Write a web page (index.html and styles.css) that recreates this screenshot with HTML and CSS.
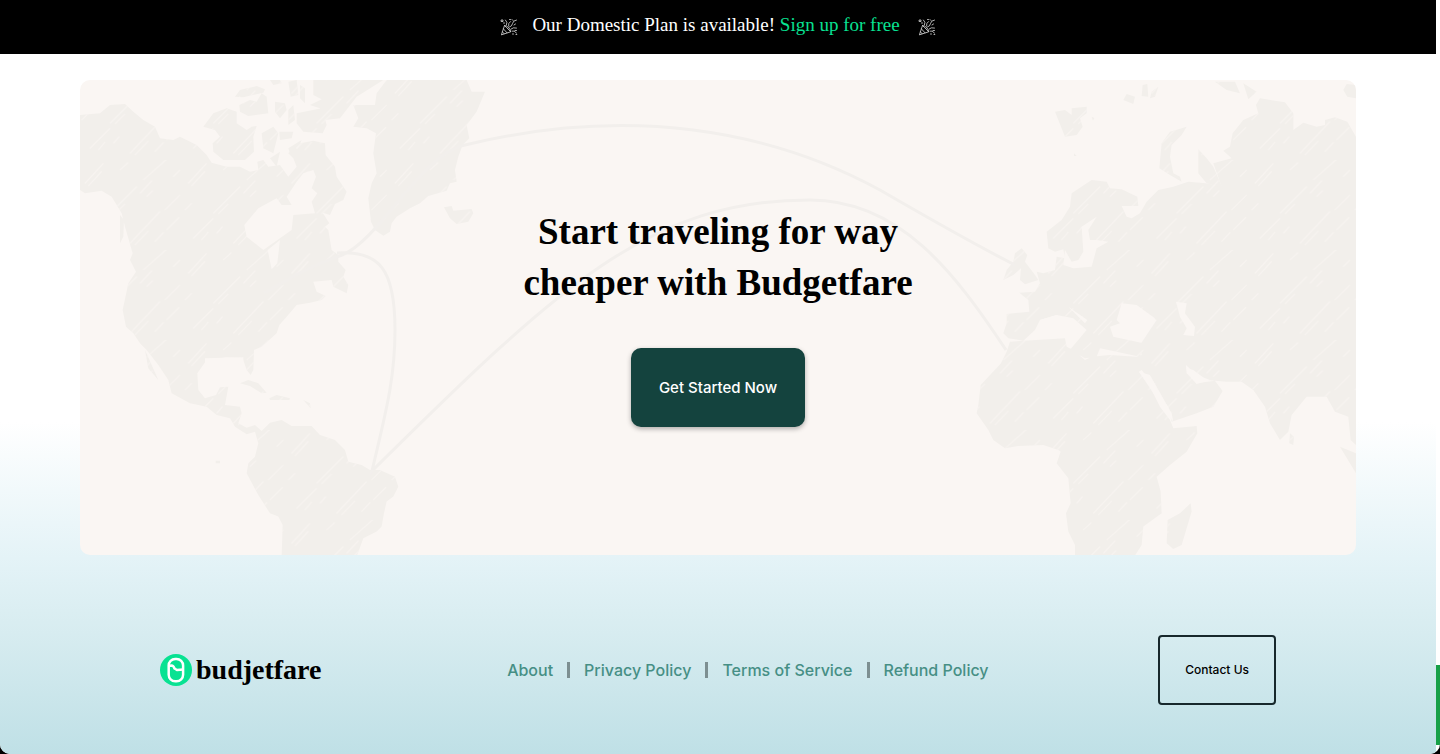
FILE: index.html
```html
<!DOCTYPE html>
<html lang="en">
<head>
<meta charset="utf-8">
<meta name="viewport" content="width=device-width, initial-scale=1">
<title>Budjetfare</title>
<link rel="stylesheet" href="styles.css">
</head>
<body>
<svg class="defs" aria-hidden="true">
  <symbol id="popper" viewBox="0 0 18 18">
    <g fill="none" stroke="currentColor" stroke-width="0.8" stroke-linecap="round" stroke-linejoin="round">
      <path d="M1.5 16.5 4.5 7.5Q6 9 10.500 13.500ZM3.500 11 7 14.800M2.600 14l1.500 1.700M4.500 7.500Q7 7.500 9 10Q11 12 10.500 13.500"/>
      <path d="M6.500 7Q8 4 5.500 2M8.500 8Q8 5 10.500 3.500M9.500 9Q12 8.500 12.500 5.500T16.500 2M11 11Q13 9 16.500 10M12 13Q14 12 16.500 15"/>
      <path d="M1.500 2h1.500v1.500h-1.500zM9.500 1.500h1M14 7l1.500-1M15 12.500h1.500M3.500 5h1M13 2.500l-1-1M12.500 16h1M16 16.500h.8"/>
    </g>
  </symbol>
</svg>
<div class="page">
  <header class="banner">
    <svg class="popper"><use href="#popper"/></svg>
    <p class="banner-text">Our Domestic Plan is available! <a href="#signup">Sign up for free</a></p>
    <svg class="popper"><use href="#popper"/></svg>
  </header>

  <main class="main">
    <section class="cta">
      <svg class="map" viewBox="0 0 1276 475" preserveAspectRatio="xMidYMid slice" aria-hidden="true">
        <defs>
          <pattern id="hatch" width="310" height="270" patternUnits="userSpaceOnUse">
            <path class="scratch" d="M15 70l55-60M25 78l40-44M90 160l80-80M105 162l30-30M190 60l70-62M180 100l36-38M200 110l18-18M30 235l60-60M55 240l20-24M150 250l90-95M165 255l40-42M255 150l45-45M260 210l38-38M225 245l26-28M120 30l24-22M280 50l20-20M5 150l20-20M100 220l18-20"/>
          </pattern>
          <g id="west">
            <path d="M0 135 60 130 90 105 135 102 160 125 190 150 225 170 240 205 280 210 300 200 350 225 380 255 395 278 440 290 480 290 510 305 535 300 532 275 550 270 565 290 600 285 625 320 650 290 640 265 625 250 650 222 700 212 735 220 737 255 765 290 770 320 800 365 790 390 765 402 750 435 728 428 748 460 735 470 745 480 755 540 775 555 775 575 797 600 790 620 805 645 800 670 760 650 755 630 700 635 710 665 737 678 725 690 690 698 650 705 620 740 598 765 590 790 545 830 522 840 520 900 512 915 500 900 488 865 440 862 380 870 352 910 355 960 375 985 408 975 420 952 445 950 435 1005 480 1010 485 1030 475 1060 500 1073 525 1065 545 1083 570 1058 605 1050 635 1068 695 1068 720 1095 765 1110 795 1140 805 1175 845 1185 870 1200 900 1200 945 1220 955 1250 940 1280 920 1295 912 1330 905 1370 890 1385 850 1405 830 1460 605 1460 608 1365 595 1340 570 1330 535 1275 500 1210 505 1180 525 1160 535 1120 525 1085 500 1093 465 1070 450 1045 410 1035 380 1010 330 1000 275 970 265 930 235 885 200 840 180 820 160 790 138 770 128 720 145 640 168 605 150 570 158 550 135 470 125 430 95 380 65 362 15 370 0 360Z"/>
            <path d="M120 435 132 450 130 500 120 520ZM195 840 235 930 205 895Z"/>
            <path d="M370 170 400 130 440 115 470 125 470 160 500 180 515 170 530 168 520 200 522 245 495 270 430 270 400 245 398 220 420 200 405 180ZM465 80 480 60 530 48 555 58 550 68 490 82ZM478 105 510 90 530 95 545 70 560 80 565 130 505 138 480 125ZM570 30 600 30 605 40 580 45ZM585 95 615 100 620 120 600 145 585 125ZM625 35 650 30 655 75 632 80ZM660 45 675 55 675 100 660 85ZM625 120 640 105 645 150 625 165ZM650 130 725 115 740 165 728 190 670 185 650 160ZM545 190 580 170 595 190 580 250 550 235ZM598 185 640 185 635 205 600 210ZM625 235 665 210 650 245 630 250ZM570 265 600 245 590 290ZM700 30 910 30 830 80 780 145 735 150 720 115 690 105 725 88 700 75Z"/>
            <path d="M920 30 1160 30 1175 65 1215 65 1190 125 1160 165 1168 205 1148 225 1135 260 1125 300 1130 335 1110 340 1100 362 1045 378 1020 400 990 415 950 440 935 460 930 485 910 497 885 480 873 455 865 385 875 340 890 310 880 250 888 190 860 175 820 170 835 145 820 105 885 105 890 70Z"/>
            <path d="M1092 412 1115 408 1120 422 1175 417 1180 430 1165 455 1130 462 1110 445ZM480 940 505 930 535 940 560 968 545 970 510 948ZM568 985 590 975 630 985 628 990 570 990ZM670 990 690 1000 692 1015ZM407 1172h13v8h-13z"/>
          </g>
          <g id="east">
            <path d="M250 1040 310 1125 355 1140 362 1145 350 1180 385 1225 392 1300 378 1330 385 1385 405 1425 405 1460 583 1460 605 1425 610 1370 665 1330 662 1265 650 1220 690 1185 740 1145 772 1090 770 1068 700 1075 690 1050 660 1010 630 950 597 905 605 900 640 945 660 980 685 1010 695 1055 770 1030 820 1010 848 963 825 932 770 940 738 895 760 900 800 930 860 935 905 935 940 960 975 1010 990 1060 1020 1110 1045 1085 1055 1035 1100 980 1160 980 1185 1025 1225 1040 1232 1110 1248 1125 1248 200 1222 155 1185 142 1155 150 1155 165 1130 170 1090 158 1060 180 1060 130 1035 97 960 85 948 105 955 130 910 150 878 190 870 230 850 242 875 265 820 280 845 350 798 340 745 335 700 350 655 360 620 395 600 430 575 445 560 440 545 408 595 408 592 380 545 358 510 355 500 335 455 330 395 370 390 410 365 450 320 485 325 535 345 545 370 538 375 565 350 560 345 600 310 610 290 605 300 640 285 665 238 668 265 690 268 725 200 732 200 760 190 790 205 805 250 812 285 780 300 750 350 735 400 745 440 780 385 845 400 845 435 865 470 860 480 835 600 860 610 820 520 800 510 770 540 760 530 750 545 700 650 750 600 825 605 855 590 860 510 855 455 860 435 870 400 840 380 830 375 805 210 815 200 845 183 880 155 910 122 945 115 1005 110 1030 145 1080 160 1110 195 1135 235 1128 310 1125Z"/>
            <path d="M220 575 225 550 245 535 262 555 255 575 285 615 295 630 255 643 240 630 243 595 220 615 190 630 200 600ZM345 125 375 120 395 135 395 115 440 110 440 130 420 145 428 170 410 195 375 200ZM550 90 560 72 585 80 580 102ZM608 45 622 42 625 80 605 78ZM635 65 655 50 645 80 630 85ZM825 35 885 35 900 70 860 60ZM910 40 950 65 925 88ZM1210 60 1220 42 1248 45 1248 85 1222 80ZM740 170 725 195 695 225 690 260 700 310 720 320 725 335 690 315 658 295 665 220 690 185ZM775 238 800 265 820 290 848 355 800 340 775 310ZM752 1300 755 1325 725 1425 700 1437 680 1420 683 1350 720 1330ZM1200 1130 1248 1150 1248 1210ZM1050 1090 1062 1100 1060 1125 1048 1120ZM402 250l8 8h-8zM455 140l8 4-4 8z"/>
          </g>
        </defs>
        <g transform="translate(0 -10) scale(.3333)">
          <use href="#west" class="land"/>
          <use href="#west" fill="url(#hatch)"/>
          <path class="sea" d="M493 465 535 415 590 385 605 405 635 405 620 380 650 335 670 310 700 300 708 320 695 355 712 370 695 395 705 430 640 435 635 480 600 505 550 540 500 500ZM563 540 600 510 592 580 575 598ZM375 865 490 862 490 880 375 890Z"/>
        </g>
        <g transform="translate(860 -10) scale(.3333)">
          <use href="#east" class="land"/>
          <use href="#east" fill="url(#hatch)"/>
          <path class="sea" d="M470 440 445 480 450 510 470 510 505 515 470 535 455 590 400 595 370 585 375 540 395 575 415 570 430 545 425 470ZM540 755 545 700 590 705 645 745 640 752ZM708 695 740 700 735 730 765 770 762 798 730 795 740 775 720 740ZM300 750 350 735 420 770 410 802 365 795 275 810 300 775ZM385 710 442 750 435 760ZM597 905 630 915 695 1030 700 1055 680 1030ZM738 885 770 915 810 930 770 942 740 910Z"/>
        </g>
        <g class="routes">
          <path d="M184 213C205 202 220 190 262 175 300 160 340 75 385 65C550 25 690 50 800 110 850 139 890 162 935 185"/>
          <path d="M257 173C300 170 315 190 315 250 315 300 305 335 292 391C480 205 570 120 730 120 820 120 875 193 926 270"/>
        </g>
      </svg>
      <h1 class="title">Start traveling for way<br>cheaper with Budgetfare</h1>
      <button class="start" type="button">Get Started Now</button>
    </section>
  </main>

  <footer class="footer">
    <a class="brand" href="#home">
      <svg class="logo" viewBox="0 0 32 32" aria-hidden="true">
        <circle cx="16" cy="16" r="16" fill="#08e292"/>
        <g fill="none" stroke="#fff" stroke-width="2.500" stroke-linejoin="round">
          <rect x="8.700" y="5" width="14.400" height="22.200" rx="6.500"/>
          <path d="M8.700 12 11.500 11.500Q13.500 11.500 14.500 14.500L17 16 23 15.500"/>
        </g>
      </svg>
      <span>budjetfare</span>
    </a>
    <nav class="links">
      <a href="#about">About</a>
      <a href="#privacy">Privacy Policy</a>
      <a href="#terms">Terms of Service</a>
      <a href="#refund">Refund Policy</a>
    </nav>
    <button class="contact" type="button">Contact Us</button>
  </footer>
</div>
<div class="track" aria-hidden="true"><div class="thumb"></div></div>
</body>
</html>
```
FILE: styles.css
```css
* { box-sizing: border-box; }

html { background: #000; }

body {
  margin: 0;
  min-height: 100vh;
  display: grid;
  grid-template-columns: minmax(0, 1fr) 4px;
  overflow: hidden;
  border-radius: 0 0 10px 10px;
  background: #fff;
  color: #000;
  font-family: Inter, "Open Sans", sans-serif;
}

a { color: inherit; text-decoration: none; }

.defs { position: absolute; width: 0; height: 0; }

.page {
  display: flex;
  flex-direction: column;
  background: linear-gradient(#fff 56%, #e4f3f7 74%, #d7ecf0 84%, #bfe0e6 100%);
}

.banner {
  display: flex;
  align-items: center;
  justify-content: center;
  gap: 14px;
  height: 54px;
  background: #000;
  color: #fff;
  font: 19px/24px "Liberation Serif", serif;
}

.banner-text { margin: 0 4px 4px 0; }
.banner-text a { color: #08e292; }
.popper { width: 18px; height: 18px; color: #ddd; }

.main { padding: 26px 80px 0; }

.cta {
  position: relative;
  display: flex;
  flex-direction: column;
  align-items: center;
  padding: 126px 24px 128px;
  overflow: hidden;
  border-radius: 10px;
  background: #faf6f3;
}

.map { position: absolute; inset: 0; width: 100%; height: 100%; }
.land { fill: #f2efeb; }
.sea { fill: #faf6f3; }
.scratch { fill: none; stroke: #f8f4f1; stroke-width: 3; }
.routes { fill: none; stroke: #f2efec; stroke-width: 3; }

.title {
  position: relative;
  margin: 0 0 40px;
  text-align: center;
  font: bold 37px/51px "Liberation Serif", serif;
}

.start {
  position: relative;
  padding: 28px;
  border: 0;
  border-radius: 10px;
  background: #14433e;
  color: #fff;
  box-shadow: 0 2px 5px rgb(0 0 0 / 30%);
  font: 500 15px/23px Inter, sans-serif;
}

.footer {
  display: flex;
  flex: 1;
  align-items: center;
  justify-content: space-between;
  padding: 30px 160px 0;
}

.brand {
  display: flex;
  align-items: center;
  gap: 4px;
  font: bold 28px/32px "Liberation Serif", serif;
}

.logo { width: 32px; height: 32px; }

.links {
  display: flex;
  margin-left: 16px;
  color: #468f85;
  font-size: 16px;
  font-weight: 500;
  line-height: 16px;
}

.links a + a {
  margin-left: 14px;
  padding-left: 14px;
  border-left: 3px solid #7d8f91;
}

.contact {
  padding: 24px 25px;
  border: 2px solid #17282c;
  border-radius: 4px;
  background: transparent;
  color: #000;
  font: 500 12px/18px Inter, sans-serif;
}

.track {
  display: flex;
  align-items: flex-end;
  padding-bottom: 9px;
}

.thumb { width: 100%; height: 80px; background: #18a048; }
```
